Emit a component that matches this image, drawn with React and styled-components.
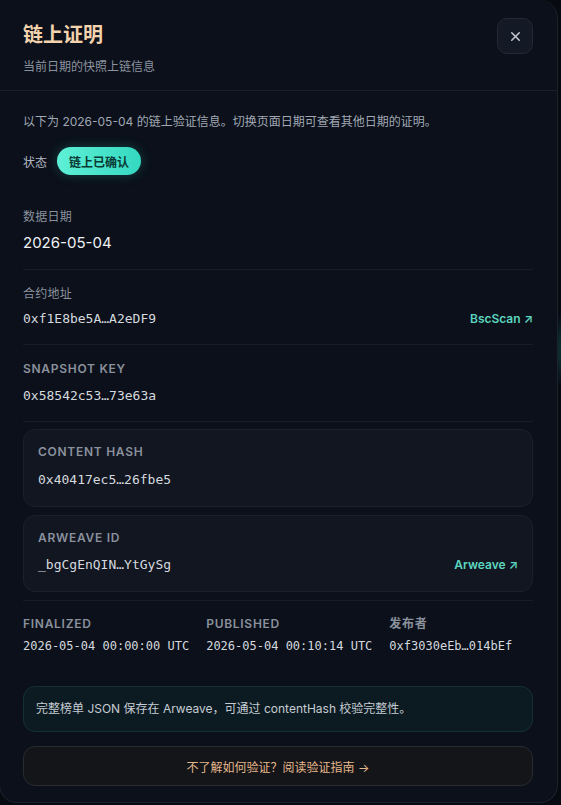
import React from 'react';
import styled, { createGlobalStyle } from 'styled-components';
import { X } from 'lucide-react';

const GlobalStyle = createGlobalStyle`
  html, body {
    margin: 0;
    padding: 0;
    background: #070a11;
  }
  body {
    font-family: Inter, "Noto Sans CJK SC", sans-serif;
    -webkit-font-smoothing: antialiased;
  }
`;

const Screen = styled.div`
  width: 561px;
  height: 805px;
  overflow: hidden;
  background:
    radial-gradient(circle at 575px 350px, rgba(45, 212, 191, 0.28) 0, rgba(45, 212, 191, 0) 40px),
    #070a11;
`;

const Panel = styled.div`
  width: 559px;
  height: 803px;
  margin-left: -1px;
  box-sizing: border-box;
  background: #0b101a;
  border: 1px solid #1c222d;
  border-top: none;
  border-radius: 0 18px 18px 18px;
  display: flex;
  flex-direction: column;
`;

const Header = styled.header`
  display: flex;
  justify-content: space-between;
  align-items: flex-start;
  padding: 20px 24px 14px 23px;
  border-bottom: 1px solid #1a202a;
`;

const Title = styled.h1`
  margin: 0;
  font-size: 20px;
  line-height: 30px;
  font-weight: 700;
  color: #f3d2ae;
`;

const Subtitle = styled.p`
  margin: 8px 0 0;
  font-size: 12px;
  line-height: 18px;
  color: #8c93a0;
`;

const CloseButton = styled.button`
  width: 36px;
  height: 36px;
  margin-top: -2px;
  border-radius: 10px;
  background: #141a25;
  border: 1px solid #232a36;
  color: #c3c8d1;
  display: flex;
  align-items: center;
  justify-content: center;
  padding: 0;
`;

const Body = styled.div`
  padding: 22px 24px 0 23px;
  display: flex;
  flex-direction: column;
`;

const Intro = styled.p`
  margin: 0;
  font-size: 12px;
  line-height: 18px;
  color: #a1a8b4;
`;

const StatusRow = styled.div`
  display: flex;
  align-items: center;
  gap: 10px;
  margin-top: 16px;
  margin-bottom: 18px;
`;

const StatusLabel = styled.span`
  font-size: 12px;
  color: #b3b9c3;
`;

const Pill = styled.span`
  height: 28px;
  padding: 0 12px;
  border-radius: 14px;
  display: inline-flex;
  align-items: center;
  font-size: 12px;
  font-weight: 700;
  color: #083a33;
  background: linear-gradient(90deg, #5ef0d6 0%, #34d9c0 100%);
  box-shadow: 0 0 12px rgba(52, 217, 192, 0.25);
`;

const Field = styled.div`
  display: flex;
  justify-content: space-between;
  align-items: flex-end;
  padding: ${p => p.$pad || '15px 0 16px'};
  border-bottom: 1px solid #171d27;
`;

const FieldText = styled.div`
  display: flex;
  flex-direction: column;
  gap: ${p => p.$gap || '7px'};
`;

const Label = styled.span`
  font-size: 12px;
  line-height: 18px;
  color: #8a919d;
  font-weight: ${p => (p.$caps ? 600 : 400)};
  letter-spacing: ${p => (p.$caps ? '0.06em' : '0.02em')};
  text-transform: ${p => (p.$caps ? 'uppercase' : 'none')};
`;

const DateValue = styled.span`
  font-size: 15px;
  line-height: 22px;
  color: #f0f2f5;
`;

const Mono = styled.span`
  font-family: "DejaVu Sans Mono", "Liberation Mono", monospace;
  font-size: ${p => (p.$small ? '12px' : '13px')};
  line-height: 18px;
  color: #d5d9df;
  white-space: nowrap;
`;

const ExtLink = styled.a`
  font-size: 12px;
  line-height: 18px;
  font-weight: 600;
  color: #5dd5bf;
  text-decoration: none;
`;

const Cards = styled.div`
  display: flex;
  flex-direction: column;
  gap: 8px;
  padding: 7px 0 8px;
  border-bottom: 1px solid #171d27;
`;

const Card = styled.div`
  display: flex;
  justify-content: space-between;
  align-items: flex-end;
  padding: 13px 14px 17px 14px;
  border-radius: 12px;
  background: #111621;
  border: 1px solid #1b212c;
`;

const Meta = styled.div`
  display: flex;
  gap: 17px;
  padding: 14px 0 0;
`;

const MetaItem = styled.div`
  display: flex;
  flex-direction: column;
  gap: 4px;
`;

const Notice = styled.div`
  margin-top: 31px;
  padding: 13px 12px;
  border-radius: 12px;
  background: #0c1b21;
  border: 1px solid #153034;
  font-size: 12px;
  line-height: 18px;
  color: #c6ccd4;
`;

const GuideButton = styled.button`
  margin-top: 14px;
  height: 40px;
  border-radius: 12px;
  background: #141519;
  border: 1px solid #292b31;
  font-family: inherit;
  font-size: 12px;
  color: #e4b78b;
  cursor: pointer;
`;

export default function App() {
  return (
    <>
      <GlobalStyle />
      <Screen>
        <Panel>
          <Header>
            <div>
              <Title>链上证明</Title>
              <Subtitle>当前日期的快照上链信息</Subtitle>
            </div>
            <CloseButton aria-label="关闭">
              <X size={15} strokeWidth={2.4} />
            </CloseButton>
          </Header>
          <Body>
            <Intro>以下为 2026-05-04 的链上验证信息。切换页面日期可查看其他日期的证明。</Intro>
            <StatusRow>
              <StatusLabel>状态</StatusLabel>
              <Pill>链上已确认</Pill>
            </StatusRow>

            <Field $pad="15px 0 15px">
              <FieldText $gap="6px">
                <Label>数据日期</Label>
                <DateValue>2026-05-04</DateValue>
              </FieldText>
            </Field>
            <Field>
              <FieldText>
                <Label>合约地址</Label>
                <Mono>0xf1E8be5A…A2eDF9</Mono>
              </FieldText>
              <ExtLink href="#">BscScan ↗</ExtLink>
            </Field>
            <Field $pad="15px 0 16px">
              <FieldText $gap="9px">
                <Label $caps>Snapshot Key</Label>
                <Mono>0x58542c53…73e63a</Mono>
              </FieldText>
            </Field>

            <Cards>
              <Card>
                <FieldText $gap="10px">
                  <Label $caps>Content Hash</Label>
                  <Mono>0x40417ec5…26fbe5</Mono>
                </FieldText>
              </Card>
              <Card>
                <FieldText $gap="9px">
                  <Label $caps>Arweave ID</Label>
                  <Mono>_bgCgEnQIN…YtGySg</Mono>
                </FieldText>
                <ExtLink href="#">Arweave ↗</ExtLink>
              </Card>
            </Cards>

            <Meta>
              <MetaItem>
                <Label $caps>Finalized</Label>
                <Mono $small>2026-05-04 00:00:00 UTC</Mono>
              </MetaItem>
              <MetaItem>
                <Label $caps>Published</Label>
                <Mono $small>2026-05-04 00:10:14 UTC</Mono>
              </MetaItem>
              <MetaItem>
                <Label $caps>发布者</Label>
                <Mono $small>0xf3030eEb…014bEf</Mono>
              </MetaItem>
            </Meta>

            <Notice>完整榜单 JSON 保存在 Arweave，可通过 contentHash 校验完整性。</Notice>
            <GuideButton>不了解如何验证？阅读验证指南 →</GuideButton>
          </Body>
        </Panel>
      </Screen>
    </>
  );
}
